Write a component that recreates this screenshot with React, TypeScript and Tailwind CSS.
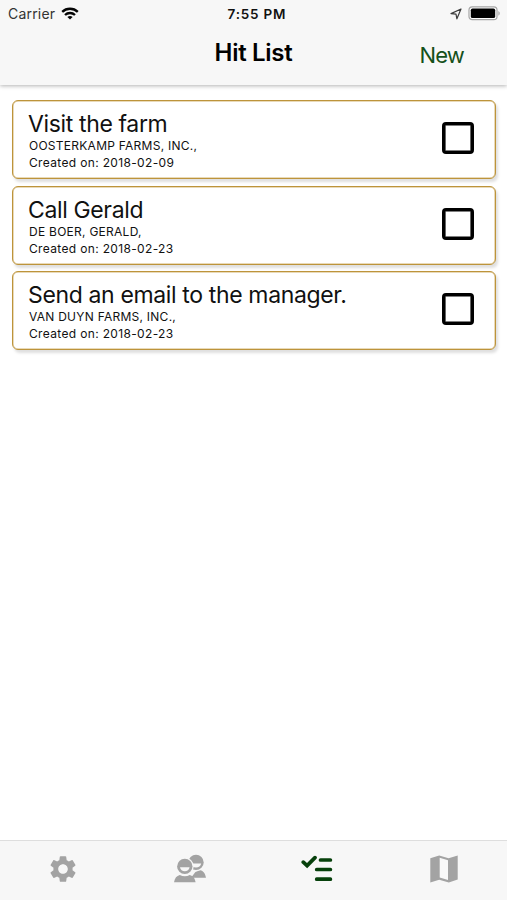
import { MdSettings } from "react-icons/md";

type Task = { title: string; account: string; date: string };

const tasks: Task[] = [
  { title: "Visit the farm", account: "OOSTERKAMP FARMS, INC.,", date: "2018-02-09" },
  { title: "Call Gerald", account: "DE BOER, GERALD,", date: "2018-02-23" },
  { title: "Send an email to the manager.", account: "VAN DUYN FARMS, INC.,", date: "2018-02-23" },
];

function WifiIcon() {
  return (
    <svg width="18" height="13" viewBox="0 0 18 13" fill="none" stroke="#050505" strokeWidth="2.3">
      <path d="M1.2 4.9a11.2 11.2 0 0 1 15.6 0" />
      <path d="M4 8a7.2 7.2 0 0 1 10 0" />
      <path d="M6.4 10.1a3.8 3.8 0 0 1 5.2 0L9 12.6Z" fill="#050505" stroke="none" />
    </svg>
  );
}

function LocationIcon() {
  return (
    <svg width="12" height="12" viewBox="0 0 12 12" fill="none" stroke="#3c3c3c" strokeWidth="1.2" strokeLinejoin="round">
      <path d="M11 1 1 5.6 6 6.1 6.9 10.8Z" />
    </svg>
  );
}

function BatteryIcon() {
  return (
    <svg width="33" height="15" viewBox="0 0 33 15">
      <rect x="1" y="0.9" width="28" height="12.8" rx="3.2" fill="#fff" stroke="#a5a5a5" strokeWidth="1.2" />
      <rect x="2.8" y="2.6" width="24.4" height="9.5" rx="1.7" fill="#000" />
      <path d="M30.4 5v4.7c1.8-.9 1.8-3.8 0-4.7Z" fill="#a5a5a5" />
    </svg>
  );
}

function PeopleIcon() {
  return (
    <svg width="34" height="30" viewBox="0 0 34 30" fill="#a3a3a3">
      <circle cx="23" cy="8.4" r="7.7" />
      <path d="M18 9.6h10.2c-.6 2.5-2.5 4-5.2 4s-4.6-1.5-5-4Z" fill="#f7f7f7" />
      <path d="M18 23.7 22.4 18c2-1 3.4-1 4.9-1.8 2.9.6 4.9 2.9 5.7 7.5Z" />
      <circle cx="11.8" cy="12.4" r="8.9" fill="#f7f7f7" />
      <circle cx="11.8" cy="12.4" r="7.7" />
      <path d="M7 13.2h9.6c-.5 2.5-2.3 4-4.8 4s-4.3-1.5-4.8-4Z" fill="#f7f7f7" />
      <path d="M1 28.2c.8-4.2 2.6-6.3 5.8-7.2 3.2 1.6 6.8 1.6 10 0 3.4.9 5 3 5.8 7.2Z" />
    </svg>
  );
}

function ChecklistIcon() {
  return (
    <svg width="32" height="28" viewBox="0 0 32 28" fill="none" stroke="#07410c" strokeWidth="3.7" strokeLinecap="round">
      <path d="M2.3 7.1 6.1 10.6 14 2.6" />
      <path d="M19.5 5h9.9M15.7 14.5h13.7M15.7 24.2h13.7" />
    </svg>
  );
}

function MapIcon() {
  return (
    <svg width="28" height="28" viewBox="0 0 28 28">
      <path d="M.3 3.3 9.2.5 18.6 3.2 27.7.5V24.6L18.8 27.6 9.2 24.7.3 27.5Z" fill="#a3a3a3" />
      <path d="M9.7 2.7 18 5.2V25.1L9.7 22.6Z" fill="#f8f8f8" />
    </svg>
  );
}

function TaskCard({ title, account, date }: Task) {
  return (
    <article className="flex h-[79px] items-start justify-between rounded-[6px] border border-[#bd943b] bg-white pl-[15px] pr-[21px] shadow-[inset_0_0_0_0.5px_#d3b574,2px_3px_3px_rgba(0,0,0,0.13)]">
      <div className="whitespace-nowrap text-[#111]">
        <h2 className="mt-2 h-[28px] text-[23px] leading-[30px] tracking-[-0.36px]">{title}</h2>
        <p className="ml-px h-[17px] text-[12px] leading-[17px] tracking-[0.26px]">{account}</p>
        <p className="ml-px h-[17px] text-[12px] leading-[17px] tracking-[0.34px]">Created on: {date}</p>
      </div>
      <button aria-label={title} className="mt-[21px] size-8 rounded-[4px] border-[3px] border-black shadow-[inset_0_0_0_0.6px_#000]" />
    </article>
  );
}

export default function App() {
  return (
    <div className="flex h-[900px] w-[507px] flex-col overflow-hidden bg-white font-['Inter','Liberation_Sans',sans-serif]">
      <header className="h-[85px] shrink-0 bg-[#f7f7f7] shadow-[0_1px_4px_rgba(0,0,0,0.3)]">
        <div className="grid h-[27px] grid-cols-3 items-center pl-2 pr-[6px] text-[14px] leading-[17px]">
          <div className="flex items-center gap-[6px] text-[#333]">
            <span className="tracking-[0.2px]">Carrier</span>
            <WifiIcon />
          </div>
          <span className="pl-[5px] pt-px text-center text-[13.5px] font-semibold tracking-[0.8px] text-[#111]">7:55 PM</span>
          <div className="flex items-center justify-end gap-[6px]">
            <LocationIcon />
            <BatteryIcon />
          </div>
        </div>
        <div className="grid h-[52px] grid-cols-3 items-center">
          <h1 className="col-start-2 text-center text-[24px] font-semibold leading-[28px] tracking-[-0.3px] text-black">Hit List</h1>
          <button className="mr-[43px] mt-[3px] justify-self-end text-[22px] leading-[28px] tracking-[-0.8px] text-[#15501a]">New</button>
        </div>
      </header>
      <main className="flex flex-1 flex-col gap-[6.6px] pl-3 pr-[11px] pt-[15.3px]">
        {tasks.map((task) => (
          <TaskCard key={task.title} {...task} />
        ))}
      </main>
      <nav className="grid h-[60px] shrink-0 grid-cols-4 place-items-center border-t border-[#dedede] bg-[#f7f7f7] pb-1">
        <MdSettings size={32} color="#a3a3a3" />
        <PeopleIcon />
        <ChecklistIcon />
        <MapIcon />
      </nav>
    </div>
  );
}
